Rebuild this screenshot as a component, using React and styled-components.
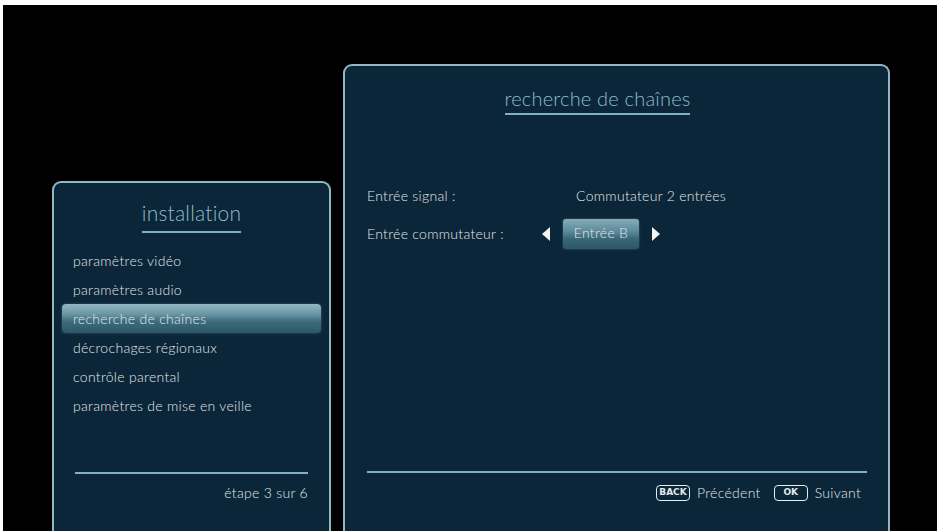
import React from "react";
import styled, { createGlobalStyle } from "styled-components";

const GlobalStyle = createGlobalStyle`
  html, body {
    margin: 0;
    background: #ffffff;
  }
  body {
    padding: 5px 0 0 3px;
    font-family: Lato, "Open Sans", "DejaVu Sans", sans-serif;
    overflow: hidden;
  }
`;

const Screen = styled.div`
  height: 526px;
  background: #000;
  display: flex;
  padding-left: 49px;
  gap: 12px;
  overflow: hidden;
`;

const Panel = styled.section`
  box-sizing: border-box;
  width: ${(p) => p.width}px;
  margin-top: ${(p) => p.top}px;
  height: calc(100% - ${(p) => p.top}px + 10px);
  background: #0b2638;
  border: 2px solid #93b6c3;
  border-bottom: none;
  border-radius: 9px 9px 0 0;
  display: flex;
  flex-direction: column;
  color: #e2e8eb;
  font-weight: 300;
  letter-spacing: 0.3px;
`;

const TitleWrap = styled.div`
  display: flex;
  justify-content: center;
  padding-top: ${(p) => p.pad}px;
  padding-right: ${(p) => p.shift || 0}px;
`;

const Title = styled.h1`
  margin: 0;
  font-family: Lato, "Open Sans", sans-serif;
  font-weight: 300;
  font-size: ${(p) => p.size}px;
  line-height: 26px;
  color: #8dbccb;
  padding-bottom: ${(p) => p.gap}px;
  border-bottom: 2px solid #7fb1c2;
  letter-spacing: 0.2px;
`;

const Menu = styled.ul`
  list-style: none;
  margin: 13px 8px 0;
  padding: 0;
  display: flex;
  flex-direction: column;
`;

const Item = styled.li`
  height: 29px;
  line-height: 29px;
  padding-left: 11px;
  font-size: 14px;
  border-radius: 4px;
  background: ${(p) =>
    p.active
      ? "linear-gradient(to bottom, #93b8c3 0%, #6a96a4 35%, #3e6c7c 60%, #2c5767 100%)"
      : "transparent"};
  box-shadow: ${(p) => (p.active ? "0 0 3px rgba(120,170,190,0.4)" : "none")};
`;

const LeftFooter = styled.div`
  margin: auto 21px 0 21px;
  padding: 10px 0 39px;
  border-top: 2px solid #7fb1c2;
  text-align: right;
  font-size: 14px;
  line-height: 18px;
`;

const Form = styled.div`
  margin-top: 69px;
  padding: 0 22px;
  display: grid;
  grid-template-columns: 209px 1fr;
  row-gap: 14px;
  font-size: 14px;
`;

const Label = styled.div`
  height: 24px;
  line-height: 24px;
`;

const Value = styled.div`
  height: 24px;
  line-height: 24px;
  display: flex;
  align-items: center;
`;

const Selector = styled.div`
  display: flex;
  align-items: center;
  gap: 13px;
  margin-left: -34px;
`;

const ChoiceButton = styled.div`
  width: 76px;
  height: 30px;
  line-height: 28px;
  text-align: center;
  border-radius: 3px;
  background: linear-gradient(to bottom, #85acb8 0%, #5e8b9a 40%, #3a6878 65%, #2c5767 100%);
  box-shadow: 0 0 2px rgba(150, 190, 205, 0.5);
`;

const RightFooter = styled.div`
  margin: auto 21px 0 22px;
  padding: 11px 6px 40px 0;
  border-top: 2px solid #7fb1c2;
  display: flex;
  justify-content: flex-end;
  align-items: center;
  font-size: 14px;
`;

const Hint = styled.span`
  display: flex;
  align-items: center;
  gap: 7px;
  margin-left: 13px;
`;

const Key = styled.span`
  box-sizing: border-box;
  min-width: ${(p) => p.w}px;
  height: 16px;
  border: 1.5px solid #e8eef0;
  border-radius: 4px;
  font-family: "DejaVu Sans", sans-serif;
  font-weight: bold;
  font-size: 9px;
  letter-spacing: 0;
  line-height: 13px;
  text-align: center;
  padding: 0 2px;
`;

const Arrow = ({ dir }) => (
  <svg width="8" height="14" viewBox="0 0 8 14">
    {dir === "left" ? (
      <polygon points="8,0 8,14 0,7" fill="#f2f5f6" />
    ) : (
      <polygon points="0,0 0,14 8,7" fill="#f2f5f6" />
    )}
  </svg>
);

const items = [
  "paramètres vidéo",
  "paramètres audio",
  "recherche de chaînes",
  "décrochages régionaux",
  "contrôle parental",
  "paramètres de mise en veille",
];

export default function App() {
  return (
    <>
      <GlobalStyle />
      <Screen>
        <Panel width={279} top={176}>
          <TitleWrap pad={17}>
            <Title size={21} gap={5}>installation</Title>
          </TitleWrap>
          <Menu>
            {items.map((it, i) => (
              <Item key={it} active={i === 2}>
                {it}
              </Item>
            ))}
          </Menu>
          <LeftFooter>étape 3 sur 6</LeftFooter>
        </Panel>
        <Panel width={547} top={59}>
          <TitleWrap pad={19} shift={38}>
            <Title size={20} gap={2}>recherche de chaînes</Title>
          </TitleWrap>
          <Form>
            <Label>Entrée signal :</Label>
            <Value>Commutateur 2 entrées</Value>
            <Label>Entrée commutateur :</Label>
            <Value>
              <Selector>
                <Arrow dir="left" />
                <ChoiceButton>Entrée B</ChoiceButton>
                <Arrow dir="right" />
              </Selector>
            </Value>
          </Form>
          <RightFooter>
            <Hint>
              <Key w={34}>BACK</Key>
              Précédent
            </Hint>
            <Hint>
              <Key w={34}>OK</Key>
              Suivant
            </Hint>
          </RightFooter>
        </Panel>
      </Screen>
    </>
  );
}
